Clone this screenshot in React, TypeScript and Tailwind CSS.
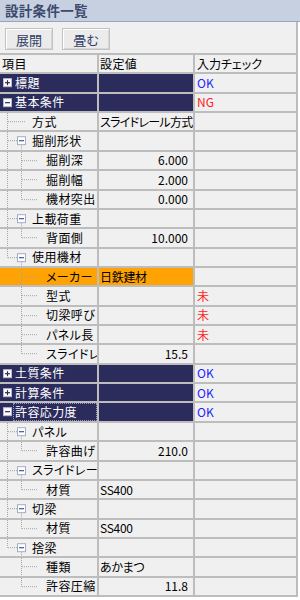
import React from "react";

type Row = {
  label: string;
  level: 0 | 1 | 2;
  sym?: "+" | "-";
  box?: boolean;
  last?: boolean;
  parentLast?: boolean;
  value?: string;
  num?: boolean;
  tight?: boolean;
  check?: string;
  checkColor?: "blue" | "red";
  hl?: boolean;
  focus?: boolean;
};

const rows: Row[] = [
  { label: "標題", level: 0, sym: "+", check: "OK", checkColor: "blue" },
  { label: "基本条件", level: 0, sym: "-", check: "NG", checkColor: "red" },
  { label: "方式", level: 1, value: "スライドレール方式", tight: true },
  { label: "掘削形状", level: 1, box: true },
  { label: "掘削深", level: 2, value: "6.000", num: true },
  { label: "掘削幅", level: 2, value: "2.000", num: true },
  { label: "機材突出", level: 2, last: true, value: "0.000", num: true },
  { label: "上載荷重", level: 1, box: true },
  { label: "背面側", level: 2, last: true, value: "10.000", num: true },
  { label: "使用機材", level: 1, box: true, last: true },
  { label: "メーカー", level: 2, parentLast: true, hl: true, value: "日鉄建材" },
  { label: "型式", level: 2, parentLast: true, check: "未", checkColor: "red" },
  { label: "切梁呼び", level: 2, parentLast: true, check: "未", checkColor: "red" },
  { label: "パネル長", level: 2, parentLast: true, check: "未", checkColor: "red" },
  { label: "スライドレール長", level: 2, parentLast: true, last: true, value: "15.5", num: true },
  { label: "土質条件", level: 0, sym: "+", check: "OK", checkColor: "blue" },
  { label: "計算条件", level: 0, sym: "+", check: "OK", checkColor: "blue" },
  { label: "許容応力度", level: 0, sym: "-", check: "OK", checkColor: "blue", focus: true },
  { label: "パネル", level: 1, box: true },
  { label: "許容曲げ", level: 2, last: true, value: "210.0", num: true },
  { label: "スライドレール", level: 1, box: true },
  { label: "材質", level: 2, last: true, value: "SS400" },
  { label: "切梁", level: 1, box: true },
  { label: "材質", level: 2, last: true, value: "SS400" },
  { label: "捨梁", level: 1, box: true, last: true },
  { label: "種類", level: 2, parentLast: true, value: "あかまつ" },
  { label: "許容圧縮", level: 2, parentLast: true, last: true, value: "11.8", num: true },
];

const H = 17.36;
const CY = 8.68;
const LINE = "#a4a4a4";

function Tree({ r }: { r: Row }) {
  if (r.level === 0) {
    return (
      <svg width={14} height={H} viewBox={`0 0 14 ${H}`} className="shrink-0">
        <rect x={3.5} y={CY - 4} width={8} height={8} fill="#ffffff" stroke="#b8bccc" />
        <line x1={5} x2={10} y1={CY} y2={CY} stroke="#2c2c5c" strokeWidth={1.2} />
        {r.sym === "+" && <line x1={7.5} x2={7.5} y1={CY - 2.5} y2={CY + 2.5} stroke="#2c2c5c" strokeWidth={1.2} />}
      </svg>
    );
  }
  if (r.level === 1) {
    return (
      <svg width={31} height={H} viewBox={`0 0 31 ${H}`} className="shrink-0">
        <line x1={7.5} x2={7.5} y1={0} y2={r.last ? CY : H} stroke={LINE} strokeDasharray="1 1" />
        <line x1={8} x2={r.box ? 17 : 26} y1={CY} y2={CY} stroke={LINE} strokeDasharray="1 1" />
        {r.box && (
          <>
            <line x1={21.5} x2={21.5} y1={CY + 4} y2={H} stroke={LINE} strokeDasharray="1 1" />
            <rect x={17.5} y={CY - 4} width={8} height={8} fill="#ffffff" stroke="#a4adbf" />
            <line x1={19} x2={24} y1={CY} y2={CY} stroke="#3a5aa8" strokeWidth={1.2} />
          </>
        )}
      </svg>
    );
  }
  return (
    <svg width={45} height={H} viewBox={`0 0 45 ${H}`} className="shrink-0">
      {!r.parentLast && <line x1={7.5} x2={7.5} y1={0} y2={H} stroke={LINE} strokeDasharray="1 1" />}
      <line x1={21.5} x2={21.5} y1={0} y2={r.last ? CY : H} stroke={LINE} strokeDasharray="1 1" />
      <line x1={22} x2={38} y1={CY} y2={CY} stroke={LINE} strokeDasharray="1 1" />
    </svg>
  );
}

export default function App() {
  return (
    <div className="w-[300px] h-[600px] bg-white overflow-hidden font-['Noto_Sans_CJK_JP',sans-serif] [font-feature-settings:'palt'] text-black">
      <div className="h-[22px] bg-[#c7d0e1] border-b border-[#9aa4ba] flex items-center pl-[5px]">
        <span className="text-[13.5px] font-bold text-[#3b4a6c] leading-none tracking-[0.3px]">設計条件一覧</span>
      </div>
      <div className="w-[298px] h-[33px] bg-[#f0f0f0] border-b-2 border-r-2 border-[#bdbdbd] flex items-start gap-[9px] pl-[5px] pt-[6px]">
        {["展開", "畳む"].map((t) => (
          <div
            key={t}
            className="w-[48px] h-[22px] flex items-center justify-center bg-[#ebebeb] border border-[#c2c2c2] shadow-[inset_1px_1px_0_#ffffff,inset_-1px_-1px_0_#d6d6d6] text-[13px] text-[#2f3d66] leading-none"
          >
            {t}
          </div>
        ))}
      </div>
      <div className="w-[298px] grid grid-cols-[97px_94px_101px] auto-rows-[17.36px] gap-[2px] bg-[#bdbdbd] pr-[2px] pb-[2px] text-[12px] leading-none">
        <div className="bg-[#f0f0f0] flex items-center pl-[2px] tracking-[0.4px]">項目</div>
        <div className="bg-[#f0f0f0] flex items-center pl-[1px] tracking-[0.4px]">設定値</div>
        <div className="bg-[#f0f0f0] flex items-center pl-[2px]">入力チェック</div>
        {rows.map((r, i) => {
          const dark = r.level === 0;
          const bg = dark ? "bg-[#2c2c5c]" : r.hl ? "bg-[#ffa304]" : "bg-[#f0f0f0]";
          return (
            <React.Fragment key={i}>
              <div className={`${bg} flex items-center overflow-hidden whitespace-nowrap tracking-[0.4px] ${dark ? "text-white" : ""}`}>
                <Tree r={r} />
                {r.focus ? (
                  <span className="flex-1 self-stretch flex items-center pl-[1px] border border-dotted border-[#9a9ab8] -ml-[1px]">{r.label}</span>
                ) : (
                  <span className="pl-[1px]">{r.label}</span>
                )}
              </div>
              <div
                className={`${bg} flex items-center overflow-hidden whitespace-nowrap ${
                  r.num ? "justify-end pr-[5px]" : r.tight ? "pl-[1px] tracking-[-0.7px]" : "pl-[1px] tracking-[-0.3px]"
                }`}
              >
                {r.value}
              </div>
              <div className="bg-[#f0f0f0] flex items-center pl-[2px]">
                {r.check && (
                  <span className={r.checkColor === "blue" ? "text-[#2222ff]" : "text-[#ff2222]"}>{r.check}</span>
                )}
              </div>
            </React.Fragment>
          );
        })}
      </div>
    </div>
  );
}
